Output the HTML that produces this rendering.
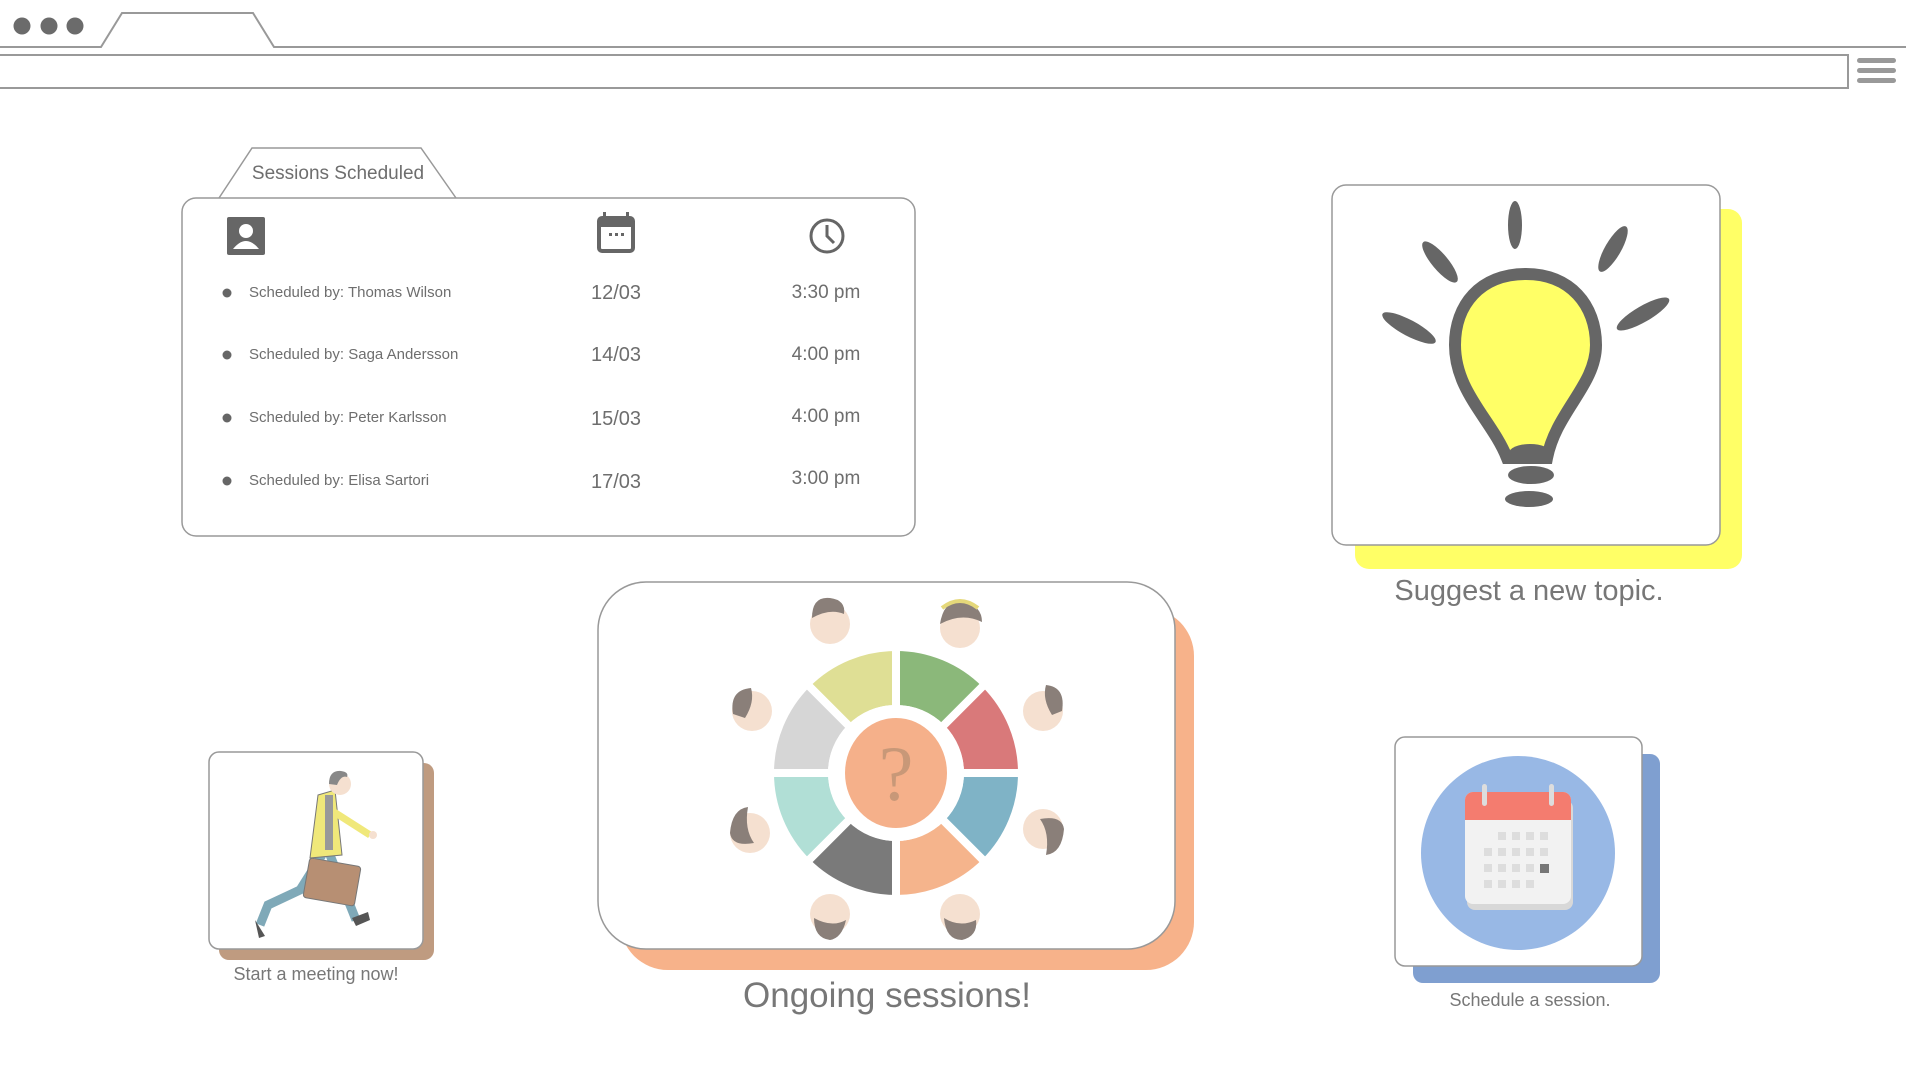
<!DOCTYPE html>
<html><head><meta charset="utf-8"><style>
html,body{margin:0;padding:0;width:1906px;height:1073px;background:#fff;overflow:hidden;font-family:"Liberation Sans",sans-serif;color:#6e6e6e}
.a{position:absolute}
.t{position:absolute;white-space:nowrap;transform:translateX(-50%)}
</style></head><body>
<svg class="a" style="left:0;top:0" width="1906" height="1073">
<!-- browser chrome -->
<circle cx="22" cy="26" r="8.5" fill="#6b6b6b"/><circle cx="49" cy="26" r="8.5" fill="#6b6b6b"/><circle cx="75" cy="26" r="8.5" fill="#6b6b6b"/>
<polyline points="0,47 101,47 122,13 253,13 274,47 1906,47" fill="none" stroke="#999" stroke-width="2"/>
<rect x="-2" y="55" width="1850" height="33" fill="none" stroke="#999" stroke-width="2"/>
<rect x="1857" y="58" width="39" height="5" rx="2.5" fill="#999"/><rect x="1857" y="68" width="39" height="5" rx="2.5" fill="#999"/><rect x="1857" y="78" width="39" height="5" rx="2.5" fill="#999"/>
<!-- sessions card -->
<polyline points="219,198 252,148 421,148 456,198" fill="#fff" stroke="#999" stroke-width="1.5"/>
<rect x="182" y="198" width="733" height="338" rx="14" fill="#fff" stroke="#999" stroke-width="1.5"/>
<!-- person icon -->
<rect x="227" y="217" width="38" height="38" rx="2" fill="#666"/>
<circle cx="246" cy="231" r="7" fill="#fff"/><path d="M233,249 q13,-16 26,0 z" fill="#fff"/>
<!-- calendar icon -->
<rect x="599" y="218" width="34" height="33" rx="3" fill="none" stroke="#666" stroke-width="4"/>
<rect x="599" y="218" width="34" height="9" fill="#666"/>
<rect x="603" y="212" width="3" height="7" fill="#666"/><rect x="626" y="212" width="3" height="7" fill="#666"/>
<rect x="609" y="233" width="3" height="3" fill="#666"/><rect x="615" y="233" width="3" height="3" fill="#666"/><rect x="621" y="233" width="3" height="3" fill="#666"/>
<!-- clock -->
<circle cx="827" cy="236" r="16" fill="none" stroke="#666" stroke-width="3"/><path d="M827,225 v11 l7,7" fill="none" stroke="#666" stroke-width="3"/>
<circle cx="227" cy="293" r="4.5" fill="#666"/><circle cx="227" cy="355" r="4.5" fill="#666"/><circle cx="227" cy="418" r="4.5" fill="#666"/><circle cx="227" cy="481" r="4.5" fill="#666"/>
<!-- bulb card -->
<rect x="1355" y="209" width="387" height="360" rx="14" fill="#ffff66"/>
<rect x="1332" y="185" width="388" height="360" rx="14" fill="#fff" stroke="#999" stroke-width="1.5"/>
<g fill="#666">
<ellipse cx="1515" cy="225" rx="7" ry="24"/>
<ellipse cx="1440" cy="262" rx="8" ry="26" transform="rotate(-40 1440 262)"/>
<ellipse cx="1613" cy="249" rx="8" ry="26" transform="rotate(30 1613 249)"/>
<ellipse cx="1409" cy="328" rx="8" ry="30" transform="rotate(-62 1409 328)"/>
<ellipse cx="1643" cy="314" rx="8" ry="30" transform="rotate(60 1643 314)"/>
</g>
<path d="M1526,274 C1480,274 1455,305 1455,345 C1455,392 1492,420 1507,458 L1547,458 C1556,412 1596,385 1596,345 C1596,305 1570,274 1526,274Z" fill="#ffff66" stroke="#666" stroke-width="12"/>
<g fill="#666"><ellipse cx="1530" cy="453" rx="21" ry="9"/><ellipse cx="1531" cy="475" rx="23" ry="9"/><ellipse cx="1529" cy="499" rx="24" ry="8"/></g>
<!-- ongoing card -->
<rect x="620" y="608" width="574" height="362" rx="48" fill="#f7b28a"/>
<rect x="598" y="582" width="577" height="367" rx="48" fill="#fff" stroke="#999" stroke-width="1.5"/>
<g>
<g fill="#f5e0d0">
<circle cx="830" cy="624" r="20"/><circle cx="960" cy="628" r="20"/><circle cx="752" cy="711" r="20"/><circle cx="1043" cy="711" r="20"/>
<circle cx="750" cy="833" r="20"/><circle cx="1043" cy="829" r="20"/><circle cx="830" cy="914" r="20"/><circle cx="960" cy="914" r="20"/>
</g>
<g fill="#8a7f79">
<path d="M812,618 q0,-22 18,-20 q16,2 14,16 q-14,-6 -32,4z"/>
<path d="M940,624 q4,-26 24,-22 q18,4 18,20 q-20,-10 -42,2z"/>
<path d="M733,714 q-4,-24 18,-26 q4,14 -6,30z"/>
<path d="M1062,711 q4,-24 -16,-26 q-4,14 6,30z"/>
<path d="M730,833 q2,-24 18,-26 q-4,22 6,36 q-22,4 -24,-10z"/>
<path d="M1064,829 q-2,24 -18,26 q4,-22 -6,-36 q22,-4 24,10z"/>
<path d="M814,918 q0,20 16,22 q12,-2 16,-20 q-14,8 -32,-2z"/>
<path d="M944,918 q2,22 18,22 q16,-4 14,-20 q-16,8 -32,-2z"/>
</g>
<path d="M942,608 q18,-14 36,0" fill="none" stroke="#e5d87a" stroke-width="4"/>
<g fill="none" stroke-width="54" transform="rotate(-135 896 773)">
<circle cx="896" cy="773" r="95" stroke="#dfdf95" stroke-dasharray="74.6 600" stroke-dashoffset="0"/>
<circle cx="896" cy="773" r="95" stroke="#8bb87a" stroke-dasharray="74.6 600" stroke-dashoffset="-74.6"/>
<circle cx="896" cy="773" r="95" stroke="#d9797a" stroke-dasharray="74.6 600" stroke-dashoffset="-149.2"/>
<circle cx="896" cy="773" r="95" stroke="#7fb3c6" stroke-dasharray="74.6 600" stroke-dashoffset="-223.8"/>
<circle cx="896" cy="773" r="95" stroke="#f5b48c" stroke-dasharray="74.6 600" stroke-dashoffset="-298.4"/>
<circle cx="896" cy="773" r="95" stroke="#7a7a7a" stroke-dasharray="74.6 600" stroke-dashoffset="-373"/>
<circle cx="896" cy="773" r="95" stroke="#b1dfd6" stroke-dasharray="74.6 600" stroke-dashoffset="-447.6"/>
<circle cx="896" cy="773" r="95" stroke="#d6d6d6" stroke-dasharray="74.6 600" stroke-dashoffset="-522.2"/>
</g>
<g stroke="#fff" stroke-width="8">
<line x1="896" y1="645" x2="896" y2="901"/><line x1="768" y1="773" x2="1024" y2="773"/>
<line x1="806" y1="683" x2="986" y2="863"/><line x1="986" y1="683" x2="806" y2="863"/>
</g>
<circle cx="896" cy="773" r="68" fill="#fff"/>
<ellipse cx="896" cy="773" rx="51" ry="55" fill="#f5b08a"/>
<text x="896" y="800" text-anchor="middle" font-size="78" fill="#c89878" font-family="Liberation Serif,serif">?</text>
</g>
<!-- start meeting card -->
<rect x="219" y="763" width="215" height="197" rx="10" fill="#bf9b80"/>
<rect x="209" y="752" width="214" height="197" rx="10" fill="#fff" stroke="#999" stroke-width="1.5"/>
<g>
<path d="M322,855 L300,890 L268,905 L260,925" fill="none" stroke="#7fa9b8" stroke-width="9"/>
<path d="M330,855 L342,885 L356,920" fill="none" stroke="#7fa9b8" stroke-width="9"/>
<path d="M255,920 l4,18 l6,-2z" fill="#555"/><path d="M352,918 l16,-6 l2,8 l-14,6z" fill="#555"/>
<path d="M318,795 L335,790 L342,855 L310,858z" fill="#f0e87a" stroke="#777" stroke-width="1"/>
<path d="M334,812 L370,835" stroke="#f0e87a" stroke-width="7"/>
<circle cx="373" cy="835" r="4" fill="#f5e0d0"/>
<rect x="325" y="795" width="8" height="55" fill="#999"/>
<circle cx="340" cy="784" r="11" fill="#f5e0d0"/><path d="M329,784 q0,-14 12,-13 q8,1 6,6 q-6,-2 -10,8z" fill="#888"/>
<rect x="306" y="862" width="52" height="40" rx="3" fill="#b78f73" stroke="#777" stroke-width="1" transform="rotate(10 332 882)"/>
</g>
<!-- schedule card -->
<rect x="1413" y="754" width="247" height="229" rx="10" fill="#7f9fd0"/>
<rect x="1395" y="737" width="247" height="229" rx="10" fill="#fff" stroke="#999" stroke-width="1.5"/>
<circle cx="1518" cy="853" r="97" fill="#98b8e5"/>
<rect x="1467" y="800" width="106" height="110" rx="8" fill="#d8d8d8"/>
<rect x="1465" y="792" width="106" height="112" rx="8" fill="#f2f2f2"/>
<path d="M1465,820 v-20 a8,8 0 0 1 8,-8 h90 a8,8 0 0 1 8,8 v20z" fill="#f47c6f"/>
<rect x="1482" y="784" width="5" height="22" rx="2.5" fill="#ddd"/><rect x="1549" y="784" width="5" height="22" rx="2.5" fill="#ddd"/>
<g fill="#ddd">
<rect x="1498" y="832" width="8" height="8"/><rect x="1512" y="832" width="8" height="8"/><rect x="1526" y="832" width="8" height="8"/><rect x="1540" y="832" width="8" height="8"/>
<rect x="1484" y="848" width="8" height="8"/><rect x="1498" y="848" width="8" height="8"/><rect x="1512" y="848" width="8" height="8"/><rect x="1526" y="848" width="8" height="8"/><rect x="1540" y="848" width="8" height="8"/>
<rect x="1484" y="864" width="8" height="8"/><rect x="1498" y="864" width="8" height="8"/><rect x="1512" y="864" width="8" height="8"/><rect x="1526" y="864" width="8" height="8"/>
<rect x="1484" y="880" width="8" height="8"/><rect x="1498" y="880" width="8" height="8"/><rect x="1512" y="880" width="8" height="8"/><rect x="1526" y="880" width="8" height="8"/>
</g>
<rect x="1540" y="864" width="9" height="9" fill="#777"/>
</svg>
<div class="t" style="left:338px;top:163px;font-size:19px">Sessions Scheduled</div>
<div class="a" style="left:249px;top:284px;font-size:15px">Scheduled by: Thomas Wilson</div>
<div class="a" style="left:249px;top:346px;font-size:15px">Scheduled by: Saga Andersson</div>
<div class="a" style="left:249px;top:409px;font-size:15px">Scheduled by: Peter Karlsson</div>
<div class="a" style="left:249px;top:472px;font-size:15px">Scheduled by: Elisa Sartori</div>
<div class="t" style="left:616px;top:282px;font-size:20px">12/03</div>
<div class="t" style="left:616px;top:344px;font-size:20px">14/03</div>
<div class="t" style="left:616px;top:408px;font-size:20px">15/03</div>
<div class="t" style="left:616px;top:471px;font-size:20px">17/03</div>
<div class="t" style="left:826px;top:282px;font-size:19px">3:30 pm</div>
<div class="t" style="left:826px;top:344px;font-size:19px">4:00 pm</div>
<div class="t" style="left:826px;top:406px;font-size:19px">4:00 pm</div>
<div class="t" style="left:826px;top:468px;font-size:19px">3:00 pm</div>
<div class="t" style="left:1529px;top:575px;font-size:29px;color:#777">Suggest a new topic.</div>
<div class="t" style="left:887px;top:976px;font-size:35px;color:#777">Ongoing sessions!</div>
<div class="t" style="left:316px;top:964px;font-size:18px;color:#777">Start a meeting now!</div>
<div class="t" style="left:1530px;top:990px;font-size:18px;color:#777">Schedule a session.</div>
</body></html>
